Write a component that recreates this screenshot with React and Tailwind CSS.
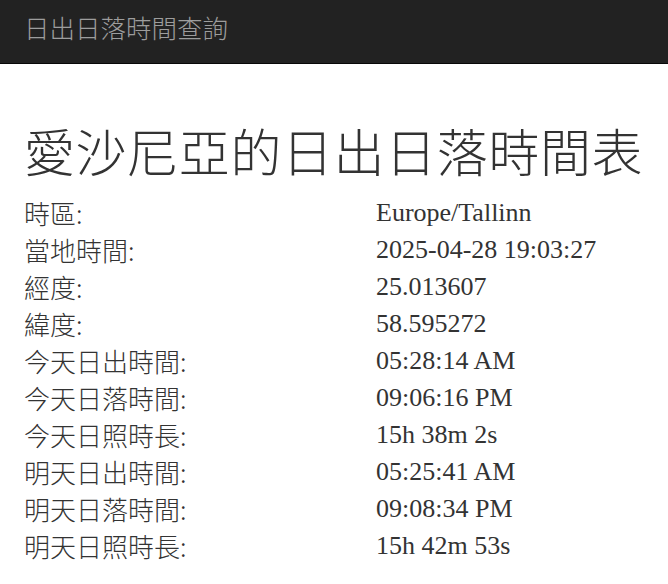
import React from "react";

const rows = [
  ["時區:", "Europe/Tallinn"],
  ["當地時間:", "2025-04-28 19:03:27"],
  ["經度:", "25.013607"],
  ["緯度:", "58.595272"],
  ["今天日出時間:", "05:28:14 AM"],
  ["今天日落時間:", "09:06:16 PM"],
  ["今天日照時長:", "15h 38m 2s"],
  ["明天日出時間:", "05:25:41 AM"],
  ["明天日落時間:", "09:08:34 PM"],
  ["明天日照時長:", "15h 42m 53s"],
];

const sans = "font-['Noto_Sans_CJK_TC','Noto_Sans',sans-serif]";

export default function App() {
  return (
    <div className="min-h-screen bg-white text-[#333]">
      <nav className="h-16 bg-[#222] border-b border-[#080808] flex items-center px-6 pb-[10px]">
        <span className={`${sans} text-[25.5px] font-light text-[#9d9d9d] leading-none`}>
          日出日落時間查詢
        </span>
      </nav>

      <div className="px-6">
        <h1 className={`${sans} text-[51px] font-light leading-[56px] mt-[58px] mb-4 text-[#333] tracking-[0.6px]`}>
          愛沙尼亞的日出日落時間表
        </h1>

        <div className="grid grid-cols-[352px_1fr] text-[26px] leading-[37px]">
          {rows.map(([label, value]) => (
            <React.Fragment key={label}>
              <div className={`${sans} font-light`}>{label}</div>
              <div className="font-['Liberation_Serif',serif]">{value}</div>
            </React.Fragment>
          ))}
        </div>
      </div>
    </div>
  );
}
